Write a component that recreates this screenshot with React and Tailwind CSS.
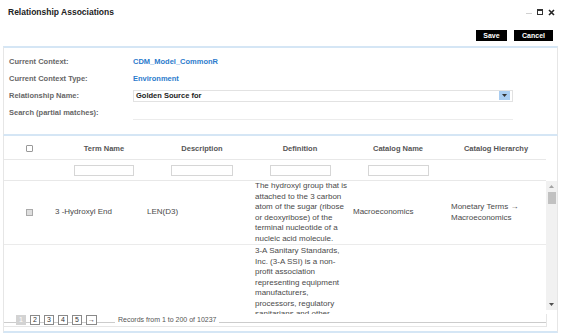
import { useState } from "react";

const defOne = [
  "The hydroxyl group that is",
  "attached to the 3 carbon",
  "atom of the sugar (ribose",
  "or deoxyribose) of the",
  "terminal nucleotide of a",
  "nucleic acid molecule.",
];

const defTwo = [
  "3-A Sanitary Standards,",
  "Inc. (3-A SSI) is a non-",
  "profit association",
  "representing equipment",
  "manufacturers,",
  "processors, regulatory",
  "sanitarians and other",
];

const formRows = [
  { label: "Current Context:", value: "CDM_Model_CommonR" },
  { label: "Current Context Type:", value: "Environment" },
];

const headers = ["Term Name", "Description", "Definition", "Catalog Name", "Catalog Hierarchy"];

export default function App() {
  const [relName] = useState("Golden Source for");

  return (
    <div className="w-[561px] h-[335px] bg-white overflow-hidden font-['Liberation_Sans',Arial,sans-serif] text-[#444]">
      {/* title bar */}
      <div className="h-[24px] flex items-center justify-between pl-[8px] pr-[6px]">
        <span className="text-[8.5px] font-bold text-[#222]">Relationship Associations</span>
        <div className="flex items-center gap-[5px]">
          <div className="w-[6px] h-px bg-[#d0d0d0] mt-[2px]" />
          <div className="w-[6px] h-[6px] border border-[#333] border-t-2" />
          <svg width="7" height="7" viewBox="0 0 7 7">
            <path d="M1 1L6 6M6 1L1 6" stroke="#222" strokeWidth="1.6" />
          </svg>
        </div>
      </div>

      {/* actions */}
      <div className="h-[22px] flex items-center justify-end gap-[7px] pr-[8px]">
        <button className="w-[31px] h-[11px] bg-black text-white text-[7px] font-bold leading-none">Save</button>
        <button className="w-[39px] h-[11px] bg-black text-white text-[7px] font-bold leading-none">Cancel</button>
      </div>

      {/* form panel */}
      <div className="ml-[3px] w-[555px] h-[90px] border-t-2 border-b-2 border-t-[#d5e6f5] border-b-[#d5e6f5] border-x border-x-[#e6e6e6] pt-[5px]">
        {formRows.map((r) => (
          <div key={r.label} className="h-[17px] flex items-center">
            <span className="w-[129px] pl-[5px] text-[7.5px] font-bold text-[#666]">{r.label}</span>
            <span className="text-[7.5px] font-bold text-[#2b7bcc]">{r.value}</span>
          </div>
        ))}
        <div className="h-[17px] flex items-center">
          <span className="w-[129px] pl-[5px] text-[7.5px] font-bold text-[#666]">Relationship Name:</span>
          <div className="w-[380px] h-[12px] border border-[#e2e2e2] flex items-center justify-between pl-[2px] pr-[2px]">
            <span className="text-[7.5px] font-bold text-[#222]">{relName}</span>
            <div className="w-[11px] h-[9px] bg-[#a9cdf1] flex items-center justify-center">
              <svg width="5" height="3" viewBox="0 0 5 3">
                <path d="M0 0H5L2.5 3Z" fill="#333" />
              </svg>
            </div>
          </div>
        </div>
        <div className="h-[17px] flex items-center">
          <span className="w-[129px] pl-[5px] text-[7.5px] font-bold text-[#666]">Search (partial matches):</span>
          <div className="w-[380px] h-[12px] border-b border-[#ececec] mt-[2px]" />
        </div>
      </div>

      {/* table panel */}
      <div className="ml-[3px] w-[555px] h-[197px] border-x border-x-[#e6e6e6] border-b-2 border-b-[#d5e6f5] pt-[2px]">
        <div className="flex">
          <div className="w-[542px]">
            <div className="h-[22px] grid grid-cols-[50px_100px_96px_100px_96px_100px] items-center border-b border-[#e8e8e8]">
              <div className="flex justify-center">
                <div className="w-[7px] h-[7px] border border-[#999] rounded-[1px] bg-white" />
              </div>
              {headers.map((h) => (
                <div key={h} className="text-center text-[7.5px] font-bold text-[#555]">{h}</div>
              ))}
            </div>
            <div className="h-[21px] grid grid-cols-[50px_100px_96px_100px_96px_100px] items-center border-b border-[#e8e8e8]">
              <div />
              <div className="flex justify-center"><div className="w-[60px] h-[11px] border border-[#d6d6d6]" /></div>
              <div className="flex justify-center"><div className="w-[62px] h-[11px] border border-[#d6d6d6]" /></div>
              <div className="flex justify-center"><div className="w-[61px] h-[11px] border border-[#d6d6d6]" /></div>
              <div className="flex justify-center"><div className="w-[61px] h-[11px] border border-[#d6d6d6]" /></div>
              <div />
            </div>
          </div>
          <div className="w-[11px]" />
        </div>

        <div className="flex h-[133px]">
          <div className="w-[542px] h-[133px] overflow-hidden text-[8px] leading-[10.5px] text-[#4a4a4a]">
            <div className="h-[64px] grid grid-cols-[48px_92px_108px_98px_98px_98px] items-center border-b border-[#ebebeb]">
              <div className="pl-[22px]">
                <div className="w-[7px] h-[7px] border border-[#aaa] bg-[#dedede]" />
              </div>
              <div className="pl-[3px]">3 -Hydroxyl End</div>
              <div className="pl-[3px]">LEN(D3)</div>
              <div className="pl-[3px] whitespace-nowrap">
                {defOne.map((l) => <div key={l}>{l}</div>)}
              </div>
              <div className="pl-[3px]">Macroeconomics</div>
              <div className="pl-[3px]">
                <div>Monetary Terms →</div>
                <div>Macroeconomics</div>
              </div>
            </div>
            <div className="grid grid-cols-[48px_92px_108px_98px_98px_98px] pt-[1px]">
              <div />
              <div />
              <div />
              <div className="pl-[3px] whitespace-nowrap">
                {defTwo.map((l) => <div key={l}>{l}</div>)}
              </div>
              <div />
              <div />
            </div>
          </div>
          <div className="w-[11px] h-[129px] bg-[#f1f1f1] flex flex-col items-center justify-between pt-[4px] pb-[4px]">
            <div className="flex flex-col items-center gap-[4px]">
              <svg width="5" height="3" viewBox="0 0 5 3"><path d="M0 3H5L2.5 0Z" fill="#a3a3a3" /></svg>
              <div className="w-[8px] h-[12px] bg-[#c1c1c1]" />
            </div>
            <svg width="5" height="3" viewBox="0 0 5 3"><path d="M0 0H5L2.5 3Z" fill="#505050" /></svg>
          </div>
        </div>

        {/* pager */}
        <div className="w-[543px] h-[13px] border-b border-r border-[#e6e6e6] flex items-end pb-[1px]">
          <div className="w-[12px] h-px bg-[#ccc] mb-[2px]" />
          <div className="w-[10px] h-[10px] bg-[#d3d3d3] text-white text-[7px] leading-[10px] text-center">1</div>
          {["2", "3", "4", "5", "→"].map((p) => (
            <div key={p} className="flex items-end">
              <div className="w-[4px] h-px bg-[#ccc] mb-[2px]" />
              <div className={`${p === "→" ? "w-[11px]" : "w-[10px]"} h-[10px] border border-[#8a8a8a] bg-white text-[#333] text-[7px] leading-[8px] text-center`}>{p}</div>
            </div>
          ))}
          <div className="w-[18px] h-px bg-[#ccc] mb-[2px]" />
          <span className="px-[3px] text-[7px] leading-[10px] text-[#555]">Records from 1 to 200 of 10237</span>
          <div className="flex-1 h-px bg-[#ccc] mb-[2px]" />
        </div>
        <div className="h-[4px]" />
      </div>
    </div>
  );
}
